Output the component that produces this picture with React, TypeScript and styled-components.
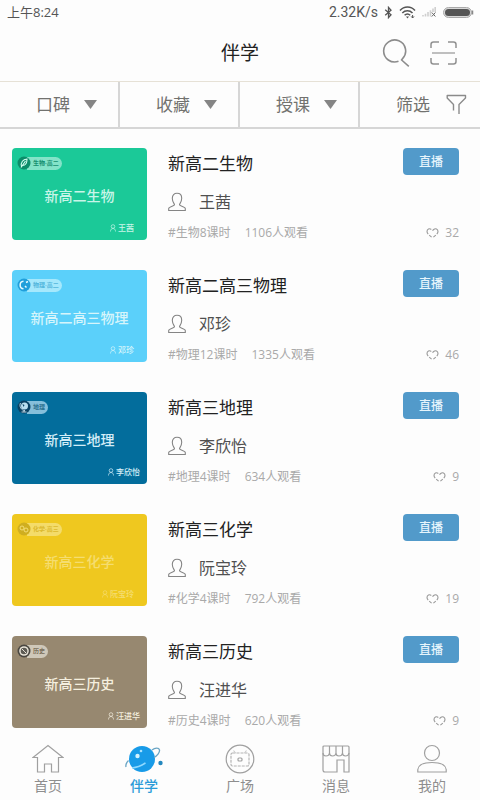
import React from "react";
import styled, { createGlobalStyle } from "styled-components";

const GlobalStyle = createGlobalStyle`
  * { box-sizing: border-box; }
  body {
    margin: 0;
    background: #fdfdfd;
    color: #222;
    font-family: "Open Sans", "Noto Sans CJK SC", sans-serif;
  }
  button {
    margin: 0;
    padding: 0;
    border: 0;
    background: none;
    color: inherit;
    font: inherit;
    cursor: pointer;
  }
  svg { display: block; flex: none; }
`;

const Page = styled.div`
  display: flex;
  flex-direction: column;
  min-height: 100vh;
`;

const StatusBar = styled.div`
  display: flex;
  align-items: center;
  justify-content: space-between;
  height: 24px;
  padding: 0 6px 0 7px;
  color: #555;
  font-size: 13px;
  line-height: 24px;
`;

const StatusGroup = styled.div`
  display: flex;
  align-items: center;
  gap: 6px;
`;

const Speed = styled.span`
  font-family: Roboto, sans-serif;
  font-size: 14px;
`;

const Header = styled.header`
  display: grid;
  grid-template-columns: 1fr auto 1fr;
  align-items: center;
  height: 57px;
  padding: 0 23px;
`;

const PageTitle = styled.h1`
  grid-column: 2;
  margin: 0;
  font-size: 19px;
  font-weight: 400;
  line-height: 28px;
`;

const HeaderActions = styled.div`
  display: flex;
  align-items: center;
  justify-content: flex-end;
  gap: 20px;
`;

const Filters = styled.div`
  display: grid;
  grid-template-columns: repeat(4, 1fr);
  height: 48px;
  border-top: 1px solid #e6e1d6;
  border-bottom: 2px solid #d6d6d6;
`;

const FilterButton = styled.button<{ $wide?: boolean }>`
  && {
    display: flex;
    align-items: center;
    gap: ${(p) => (p.$wide ? 16 : 14)}px;
    padding-left: 30%;
    border-right: ${(p) => (p.$wide ? "0" : "2px solid #d6d6d6")};
    color: #72726f;
    font-size: 17px;
    line-height: 24px;
    white-space: nowrap;
  }
`;

const CourseList = styled.ul`
  display: flex;
  flex-direction: column;
  gap: 30px;
  margin: 0;
  padding: 19px 21px 9px 12px;
  list-style: none;
`;

const CourseRow = styled.li`
  display: flex;
  gap: 21px;
`;

const Thumb = styled.div<{ $bg: string; $ink: string; $inset: number }>`
  display: flex;
  flex: none;
  flex-direction: column;
  justify-content: space-between;
  width: 135px;
  height: 92px;
  padding: 8px ${(p) => p.$inset}px 6px 5px;
  border-radius: 4px;
  background: ${(p) => p.$bg};
  color: ${(p) => p.$ink};
`;

const Badge = styled.div`
  display: flex;
  align-items: center;
  align-self: flex-start;

  svg { z-index: 1; }
`;

const BadgeLabel = styled.span<{ $bg: string; $color: string }>`
  height: 13px;
  margin-left: -4px;
  padding: 0 3px 0 6px;
  border-radius: 0 7px 7px 0;
  background: ${(p) => p.$bg};
  color: ${(p) => p.$color};
  font-size: 6px;
  font-weight: 700;
  line-height: 13px;
  white-space: nowrap;
`;

const ThumbTitle = styled.div<{ $inset: number }>`
  margin-right: ${(p) => 5 - p.$inset}px;
  font-size: 14px;
  font-weight: 500;
  line-height: 24px;
  text-align: center;
  white-space: nowrap;
`;

const ThumbTeacher = styled.div`
  display: flex;
  align-items: center;
  justify-content: flex-end;
  gap: 2px;
  font-size: 8px;
  font-weight: 500;
  line-height: 12px;
`;

const Info = styled.div`
  display: flex;
  flex: 1;
  flex-direction: column;
  justify-content: space-between;
  min-width: 0;
  height: 92px;
`;

const InfoTop = styled.div`
  display: flex;
  align-items: flex-start;
  justify-content: space-between;
`;

const CourseTitle = styled.h2`
  margin: 0;
  color: #222;
  font-size: 17px;
  font-weight: 400;
  line-height: 32px;
`;

const LiveButton = styled.button`
  && {
    width: 56px;
    height: 27px;
    border-radius: 4px;
    background: #529aca;
    color: #e6f5fc;
    font-size: 12px;
    font-weight: 500;
    line-height: 27px;
  }
`;

const Teacher = styled.div`
  display: flex;
  align-items: center;
  gap: 13px;
  margin-bottom: 2px;
  color: #505050;
  font-size: 16px;
  line-height: 24px;
`;

const Meta = styled.div`
  display: flex;
  align-items: center;
  gap: 14px;
  color: #a9a9a9;
  font-size: 12px;
  line-height: 14px;
`;

const LikeButton = styled.button`
  && {
    display: flex;
    align-items: center;
    gap: 6px;
    margin-left: auto;
  }
`;

const TabBar = styled.nav`
  display: grid;
  grid-template-columns: repeat(5, 1fr);
  margin-top: auto;
  padding-bottom: 4px;
`;

const Tab = styled.a<{ $active?: boolean }>`
  display: flex;
  flex-direction: column;
  align-items: center;
  gap: 2px;
  color: ${(p) => (p.$active ? "#2b9bd8" : "#8e8e8e")};
  font-size: 14px;
  font-weight: ${(p) => (p.$active ? 500 : 400)};
  line-height: 20px;
  text-decoration: none;
`;

const BluetoothIcon = () => (
  <svg width="9" height="13" viewBox="0 0 9 13" fill="none" stroke="#555" strokeWidth="1.3">
    <path d="M1.2 3.8 7 8.8 4.5 11.6V1.4L7 4.2 1.2 9.2" />
  </svg>
);

const WifiIcon = () => (
  <svg width="17" height="13" viewBox="0 0 17 13" fill="none" stroke="#555" strokeWidth="1.5">
    <path d="M1 4.6C5-.1 12-.1 16 4.6M3.3 7c2.8-3 7.4-3 10.2 0M5.6 9.2c1.6-1.7 4-1.7 5.6 0" />
    <path d="M7 10.6h3L8.5 12.4z" fill="#555" stroke="none" />
    <path d="M13.6 9v3M12.2 10.4 13.6 12l1.4-1.6" strokeWidth="1" />
  </svg>
);

const SignalIcon = () => (
  <svg width="15" height="10" viewBox="0 0 15 10" fill="none">
    <path d="M1 9.5V8M3.5 9.5V6.7M6 9.5V5M8.5 9.5V3.2M11 5V1.6M13.2 5V0" stroke="#cfcfcf" strokeWidth="1.6" />
    <path d="m9.8 5.5 3.6 4M13.4 5.5l-3.6 4" stroke="#666" />
  </svg>
);

const BatteryIcon = () => (
  <svg width="31" height="11" viewBox="0 0 31 11">
    <rect x=".5" y=".5" width="28" height="10" rx="5" fill="#d8d8d8" stroke="#aaa" />
    <rect x="2" y="2" width="25" height="7" rx="3.5" fill="#555" />
    <path d="M29.5 3.5v4" stroke="#888" strokeWidth="1.5" />
  </svg>
);

const SearchIcon = () => (
  <svg width="28" height="28" viewBox="0 0 28 28" fill="none" stroke="#8c8c8c" strokeWidth="1.6">
    <path d="M16.5 22.3A11 11 0 1 1 20.6 19.6L19.6 21l7.2 6.4" />
  </svg>
);

const ScanIcon = () => (
  <svg width="27" height="26" viewBox="0 0 27 26" fill="none" stroke="#919191" strokeWidth="1.5">
    <path d="M1 8V4.5Q1 2 3.5 2H9M18 2h5.5Q26 2 26 4.500V8M26 18v3.500Q26 24 23.500 24H18M9 24H3.500Q1 24 1 21.500V18" />
    <path d="M2 13h23" stroke="#aaa" />
  </svg>
);

const CaretIcon = () => (
  <svg width="13" height="9" viewBox="0 0 13 9">
    <path d="M0 0h13L6.500 9z" fill="#858585" />
  </svg>
);

const FunnelIcon = () => (
  <svg width="21" height="21" viewBox="0 0 21 21" fill="none" stroke="#8b8b8b" strokeWidth="1.4" strokeLinejoin="round">
    <path d="M7.500 16.500V10.500L1.200 4V1.500H19.500V4L13 10.500V20" />
  </svg>
);

const PersonIcon = () => (
  <svg width="18" height="20" viewBox="0 0 18 20" fill="none" stroke="#858585" strokeWidth="1.1">
    <path d="M.7 18.500V16.500C.7 14.500 6.500 14 6.500 12.800C6.500 11.700 4.300 10 4.300 6.200C4.300 3 6.200 1.300 9 1.300S13.700 3 13.700 6.200C13.700 10 11.500 11.700 11.500 12.800C11.500 14 17.300 14.500 17.300 16.500V18.500Z" />
  </svg>
);

const SmallPersonIcon = () => (
  <svg width="6" height="8" viewBox="0 0 6 8" fill="none" stroke="currentColor" strokeWidth=".7">
    <circle cx="3" cy="2.500" r="1.800" />
    <path d="M.5 7.500C.5 5.500 1.500 4.500 3 4.500S5.500 5.500 5.500 7.500" />
  </svg>
);

const HeartIcon = () => (
  <svg width="13" height="10" viewBox="0 0 13 10" fill="none" stroke="#999" strokeWidth="1.1">
    <path d="M5.300 1.500C3.500 0 1 1 1 3.600C1 4.600 1.500 5.400 2.200 6.100M3.200 7.200 5.600 9.200M7.400 9.200 9.800 7.200M10.800 6.100C11.500 5.400 12 4.600 12 3.600C12 1 9.500 0 7.700 1.500L6.500 2.700" />
  </svg>
);

type Subject = "biology" | "physics" | "geography" | "chemistry" | "history";

const subjectMarks: Record<Subject, React.ReactNode> = {
  biology: (
    <>
      <circle cx="7" cy="7" r="6.500" fill="#0b8d69" />
      <path d="M4.500 10.500C3.500 6 6 3.500 10 3c0 4-1.500 6.500-4.500 6.500M4 11.500 8.500 5" stroke="#d5fff2" strokeWidth="1.100" fill="none" />
    </>
  ),
  physics: (
    <>
      <circle cx="7" cy="7" r="6.500" fill="#209fdb" />
      <path d="M6.500 3.200C2 3.500 2 10.500 6.500 10.800M9 4.500 11 3.500M9.500 9.500 8 8" stroke="#e4faff" strokeWidth="1.500" fill="none" />
    </>
  ),
  geography: (
    <>
      <circle cx="7" cy="7" r="6.500" fill="#0a4264" />
      <circle cx="7.500" cy="6" r="3.500" fill="#b9dff0" />
      <path d="M3.500 3C2 6 4 10.500 8 10.500M7 10.500V12M4.500 12h5" stroke="#e6f6ff" strokeWidth=".8" fill="none" />
      <path d="m5.500 4 2 1-1 2z" fill="#0a4264" />
    </>
  ),
  chemistry: (
    <>
      <circle cx="7" cy="7" r="6.500" fill="#cfae20" />
      <circle cx="5" cy="6" r="2" fill="none" stroke="#f3dd75" />
      <circle cx="9" cy="8" r="2" fill="none" stroke="#f3dd75" />
    </>
  ),
  history: (
    <>
      <circle cx="7" cy="7" r="6.500" fill="#4a4741" />
      <circle cx="7" cy="7" r="4.800" fill="#e9e4d8" />
      <circle cx="7" cy="7" r="3.300" fill="#5d5a53" />
      <path d="m5 5 2.200 2.200L9 9" stroke="#e9e4d8" strokeWidth="1" />
    </>
  ),
};

const SubjectIcon = ({ subject }: { subject: Subject }) => (
  <svg width="14" height="14" viewBox="0 0 14 14">
    {subjectMarks[subject]}
  </svg>
);

const HomeIcon = () => (
  <svg width="32" height="30" viewBox="0 0 32 30" fill="none" stroke="#a0a0a0" strokeWidth="1.200">
    <path d="M1 13.500 16 1.500 31 13.500H26.500V28H19.500V20H12.500V28H5.500V13.500Z" />
  </svg>
);

const PlanetIcon = () => (
  <svg width="40" height="30" viewBox="0 0 40 30" fill="none">
    <circle cx="18" cy="15" r="13" fill="#189be8" />
    <path d="M28 6C31 3.500 35 3.500 35.500 6S33 12 30 13.500M4.500 16.500C2.500 18.500 1.500 21 2 23" stroke="#6aa5c4" strokeWidth="1.300" />
    <path d="M8 24C13.500 23.500 17.500 21.500 21.500 19" stroke="#8fd9ff" strokeWidth="1.500" />
    <circle cx="13.500" cy="12" r="2.200" fill="#d4f3ff" />
    <circle cx="17" cy="7" r="1.300" fill="#a7e2ff" />
    <circle cx="36.500" cy="19" r="2.200" fill="#2488be" />
  </svg>
);

const PlazaIcon = () => (
  <svg width="30" height="30" viewBox="0 0 30 30" fill="none" stroke="#a0a0a0" strokeWidth="1.200">
    <circle cx="15" cy="15" r="13.800" />
    <rect x="6" y="9" width="18" height="13" rx="1.500" stroke="#b4b4b4" strokeDasharray="3 1" />
    <path d="M10.500 9 8.500 6.500M19.500 9l2-2.500" stroke="#ccc" />
    <rect x="13" y="14" width="4" height="3" rx="1" />
  </svg>
);

const ShopIcon = () => (
  <svg width="28" height="30" viewBox="0 0 28 30" fill="none" stroke="#a0a0a0" strokeWidth="1.200">
    <path d="M1 10V3Q1 2 2 2H26Q27 2 27 3V28H22V16H15V28H3Q1 28 1 26V10" />
    <path d="M1 9Q1 12 4 12T7.500 9V2M7.500 9Q7.500 12 10.500 12T14 9V2M14 9Q14 12 17 12T20.500 9V2M20.500 9Q20.500 12 23.500 12T27 9" />
  </svg>
);

const ProfileIcon = () => (
  <svg width="30" height="30" viewBox="0 0 30 30" fill="none" stroke="#a0a0a0" strokeWidth="1.200">
    <circle cx="15" cy="9" r="7.500" />
    <path d="M.8 28V25.500C1.500 20.500 6 18.500 15 18.500S28.500 20.500 29.200 25.500V28Z" />
  </svg>
);

interface Course {
  title: string;
  teacher: string;
  lessons: string;
  views: number;
  likes: number;
  subject: Subject;
  badge: string;
  bg: string;
  ink: string;
  badgeBg: string;
  badgeInk: string;
  inset: number;
}

const courses: Course[] = [
  { title: "新高二生物", teacher: "王茜", lessons: "#生物8课时", views: 1106, likes: 32, subject: "biology", badge: "生物·高二", bg: "#1bc998", ink: "#c9f5e8", badgeBg: "#83e3c8", badgeInk: "#158f70", inset: 13 },
  { title: "新高二高三物理", teacher: "邓珍", lessons: "#物理12课时", views: 1335, likes: 46, subject: "physics", badge: "物理·高二", bg: "#5bd0fa", ink: "#d6f5fb", badgeBg: "#a5e8fc", badgeInk: "#53b7dc", inset: 13 },
  { title: "新高三地理", teacher: "李欣怡", lessons: "#地理4课时", views: 634, likes: 9, subject: "geography", badge: "地理", bg: "#036d9c", ink: "#d3edf8", badgeBg: "#86bfdb", badgeInk: "#2b708f", inset: 7 },
  { title: "新高三化学", teacher: "阮宝玲", lessons: "#化学4课时", views: 792, likes: 19, subject: "chemistry", badge: "化学·高三", bg: "#efc81f", ink: "#f5dd70", badgeBg: "#f4dc6a", badgeInk: "#dcb92c", inset: 13 },
  { title: "新高三历史", teacher: "汪进华", lessons: "#历史4课时", views: 620, likes: 9, subject: "history", badge: "历史", bg: "#978870", ink: "#f5efdf", badgeBg: "#cfc8b9", badgeInk: "#7c705c", inset: 7 },
];

const tabs = [
  { label: "首页", icon: <HomeIcon /> },
  { label: "伴学", icon: <PlanetIcon />, active: true },
  { label: "广场", icon: <PlazaIcon /> },
  { label: "消息", icon: <ShopIcon /> },
  { label: "我的", icon: <ProfileIcon /> },
];

const CourseItem = ({ course }: { course: Course }) => (
  <CourseRow>
    <Thumb $bg={course.bg} $ink={course.ink} $inset={course.inset}>
      <Badge>
        <SubjectIcon subject={course.subject} />
        <BadgeLabel $bg={course.badgeBg} $color={course.badgeInk}>{course.badge}</BadgeLabel>
      </Badge>
      <ThumbTitle $inset={course.inset}>{course.title}</ThumbTitle>
      <ThumbTeacher>
        <SmallPersonIcon />
        {course.teacher}
      </ThumbTeacher>
    </Thumb>
    <Info>
      <InfoTop>
        <CourseTitle>{course.title}</CourseTitle>
        <LiveButton type="button">直播</LiveButton>
      </InfoTop>
      <Teacher>
        <PersonIcon />
        {course.teacher}
      </Teacher>
      <Meta>
        <span>{course.lessons}</span>
        <span>{course.views}人观看</span>
        <LikeButton type="button" aria-label={`喜欢 ${course.likes}`}>
          <HeartIcon />
          {course.likes}
        </LikeButton>
      </Meta>
    </Info>
  </CourseRow>
);

export default function App() {
  return (
    <Page lang="zh-CN">
      <GlobalStyle />
      <StatusBar>
        <span>上午8:24</span>
        <StatusGroup>
          <Speed>2.32K/s</Speed>
          <BluetoothIcon />
          <WifiIcon />
          <SignalIcon />
          <BatteryIcon />
        </StatusGroup>
      </StatusBar>
      <Header>
        <PageTitle>伴学</PageTitle>
        <HeaderActions>
          <button type="button" aria-label="搜索"><SearchIcon /></button>
          <button type="button" aria-label="扫一扫"><ScanIcon /></button>
        </HeaderActions>
      </Header>
      <Filters>
        {["口碑", "收藏", "授课"].map((label) => (
          <FilterButton key={label} type="button">
            {label}
            <CaretIcon />
          </FilterButton>
        ))}
        <FilterButton type="button" $wide>
          筛选
          <FunnelIcon />
        </FilterButton>
      </Filters>
      <CourseList>
        {courses.map((course) => (
          <CourseItem key={course.title} course={course} />
        ))}
      </CourseList>
      <TabBar>
        {tabs.map((tab) => (
          <Tab key={tab.label} href="#" $active={tab.active} aria-current={tab.active ? "page" : undefined}>
            {tab.icon}
            {tab.label}
          </Tab>
        ))}
      </TabBar>
    </Page>
  );
}
